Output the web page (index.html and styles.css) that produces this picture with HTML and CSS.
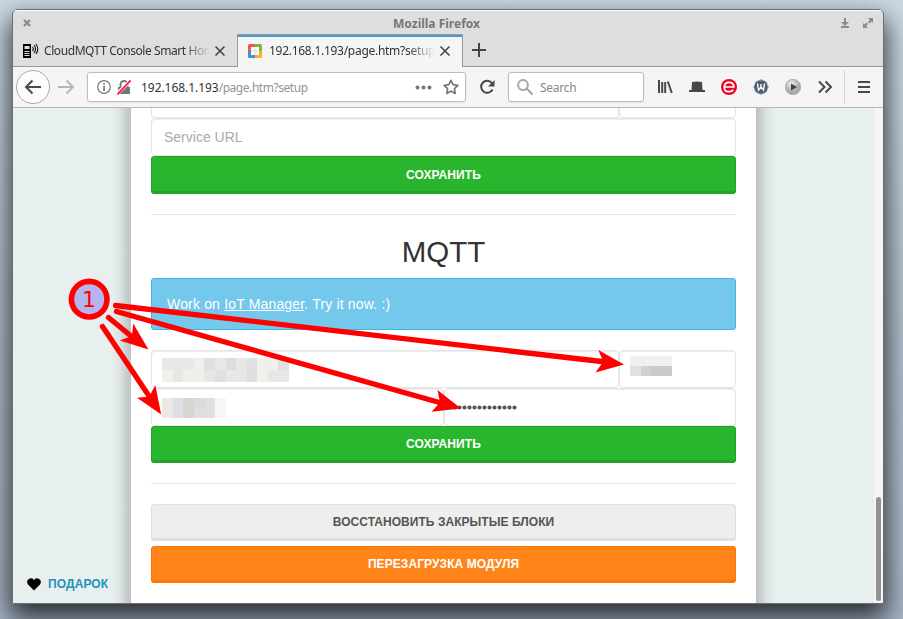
FILE: index.html
```html
<!DOCTYPE html>
<html lang="ru">
<head>
<meta charset="utf-8">
<title>Mozilla Firefox</title>
<link rel="stylesheet" href="styles.css">
</head>
<body>
<div class="window">
  <header class="titlebar">
    <svg class="win-close" width="8" height="8" viewBox="0 0 8 8"><path d="M1 1l6 6M7 1L1 7" stroke="#8b8b8b" stroke-width="2.4"/></svg>
    <span class="title">Mozilla Firefox</span>
    <svg class="win-tools" width="34" height="12" viewBox="0 0 34 12"><path d="M4 1h2v4h3L5 9 1 5h3zM1 9h8v2H1z" fill="#8b8b8b"/><path d="M28 1h5v5l-1.600-1.600L29.500 6.500 28 5l1.800-1.900zM23 6l1.600 1.600L26.500 5.500 28 7l-1.900 2L28 11h-5z" fill="#8b8b8b"/></svg>
  </header>
  <nav class="tabs">
    <div class="tab first">
      <svg width="16" height="16" viewBox="0 0 16 16"><path d="M0 1h8v14H0z"/><path d="M1.500 3h5v3h-5zM1.500 8h5v1h-5zM1.500 10h5v1h-5zM1.500 12h5v1h-5z" fill="#ddd"/><path d="M9.500 4q1.500 2 0 4M11 2q3 4 0 8M13 1q3.500 5 0 10" fill="none" stroke="#111" stroke-width="1.100"/></svg>
      <span class="tab-label cloud">CloudMQTT Console Smart Hor</span>
      <svg class="x" width="12" height="12" viewBox="0 0 12 12"><path d="M1.500 1.500l9 9M10.500 1.500l-9 9" stroke="#444" stroke-width="1.600"/></svg>
    </div>
    <div class="tab active">
      <svg width="14" height="14" viewBox="0 0 14 14"><rect width="14" height="14" rx="1.500" fill="#dce8e5"/><path d="M0 1.500Q0 0 1.500 0H7v3H3v4H0z" fill="#e85d43"/><path d="M7 0h5.500Q14 0 14 1.500V7h-3V3H7z" fill="#7db641"/><path d="M14 7v5.500q0 1.500-1.500 1.500H7v-3h4V7z" fill="#f3b52f"/><path d="M7 14H1.500Q0 14 0 12.500V7h3v4h4z" fill="#3f91d0"/><path d="M3 3h8v8H3z" fill="#fff"/><path d="M7 3v8M3 7h8" stroke="#ddd8ca"/></svg>
      <span class="tab-label local">192.168.1.193/page.htm?setup</span>
      <svg class="x" width="12" height="12" viewBox="0 0 12 12"><path d="M1.500 1.500l9 9M10.500 1.500l-9 9" stroke="#444" stroke-width="1.600"/></svg>
    </div>
    <svg class="plus" width="14" height="14" viewBox="0 0 14 14"><path d="M7 0v14M0 7h14" stroke="#444" stroke-width="2"/></svg>
  </nav>
  <div class="toolbar">
    <span class="back"><svg width="18" height="16" viewBox="0 0 18 16"><path d="M17 8H2M8.500 1.500L2 8l6.500 6.500" fill="none" stroke="#4b4b4b" stroke-width="2"/></svg></span>
    <svg class="forward" width="16" height="16" viewBox="0 0 16 16"><path d="M0 8h14.500M8.500 1.500L15 8l-6.500 6.500" fill="none" stroke="#b5b5b5" stroke-width="1.900"/></svg>
    <div class="urlbar">
      <svg width="14" height="14" viewBox="0 0 14 14"><circle cx="7" cy="7" r="6.300" fill="none" stroke="#777" stroke-width="1.200"/><path d="M6.200 3h1.700v1.700H6.200zM6.200 6h1.700v5H6.200z" fill="#777"/></svg>
      <svg class="lock" width="14" height="15" viewBox="0 0 14 15"><path d="M1 7h12v7H1z" fill="#777"/><path d="M3.500 8V4.500a3.500 3.500 0 0 1 7 0V8" fill="none" stroke="#777" stroke-width="1.900"/><path d="M0 14L13 1" stroke="#fff" stroke-width="3.400"/><path d="M.5 14.300L13.500 .5" stroke="#ff174f" stroke-width="1.900"/></svg>
      <span class="url"><b>192.168.1.193</b>/page.htm?setup</span>
      <svg class="dots" width="17" height="5" viewBox="0 0 17 5"><g fill="#777"><circle cx="2.500" cy="2.500" r="2"/><circle cx="8.500" cy="2.500" r="2"/><circle cx="14.500" cy="2.500" r="2"/></g></svg>
      <svg width="16" height="16" viewBox="0 0 16 16"><path d="M8 1.300l2.100 4.300 4.700.7-3.400 3.300.8 4.800L8 12.100l-4.200 2.300.8-4.800L1.200 6.300l4.700-.7z" fill="none" stroke="#777" stroke-width="1.700" stroke-linejoin="round"/></svg>
    </div>
    <svg class="reload" width="16" height="16" viewBox="0 0 16 16"><path d="M12.800 4A6 6 0 1 0 13.500 10.500" fill="none" stroke="#484848" stroke-width="2"/><path d="M15.500 1v6.500H9z" fill="#484848"/></svg>
    <div class="search">
      <svg width="16" height="16" viewBox="0 0 16 16"><circle cx="6" cy="6" r="4.900" fill="none" stroke="#a5a5a5" stroke-width="2"/><path d="M9.500 9.500l6 6" stroke="#a5a5a5" stroke-width="2"/></svg>
      <span>Search</span>
    </div>
    <div class="extensions">
      <svg width="16" height="16" viewBox="0 0 16 16"><path d="M2 1v13M5.200 3v11M8.200 3v11M10.800 2.500l4 11.500" stroke="#484848" stroke-width="2"/></svg>
      <svg width="16" height="16" viewBox="0 0 16 16"><path d="M3 3q5-1 10 0l.5 8H16v2H0v-2h2.500z" fill="#484848"/></svg>
      <svg width="16" height="16" viewBox="0 0 16 16"><circle cx="8" cy="8" r="8" fill="#e90427"/><path d="M3 8h10Q12.500 3.300 8 3.300T3.300 8 8 12.700q2.800 0 4.300-1.900" fill="none" stroke="#fff" stroke-width="1.700"/></svg>
      <svg width="16" height="16" viewBox="0 0 16 16"><path d="M8 0l3 1.500L14 3l.5 3L16 8l-1.500 2-.5 3-3 1.500L8 16l-3-1.500L2 13l-.5-3L0 8l1.500-2L2 3l3-1.500z" fill="#93a7bc"/><circle cx="8" cy="8" r="6.600" fill="#4e5e6e"/><path d="M4.500 4.500l1 6.500L8 8l2.500 3 1-6.500M8 5v4" fill="none" stroke="#fff" stroke-width="1.400"/></svg>
      <svg width="16" height="16" viewBox="0 0 16 16"><defs><radialGradient id="ball" cx=".4" cy=".3"><stop offset="0" stop-color="#f0f0f0"/><stop offset="1" stop-color="#aaa"/></radialGradient></defs><circle cx="8" cy="8" r="7.700" fill="url(#ball)" stroke="#999" stroke-width=".6"/><path d="M6 4.500l6 3.500-6 3.500z" fill="#444"/></svg>
      <svg width="16" height="16" viewBox="0 0 16 16"><path d="M2 2.500L7.500 8 2 13.500M8.500 2.500L14 8l-5.500 5.500" fill="none" stroke="#484848" stroke-width="2"/></svg>
    </div>
    <div class="menu"><svg width="12" height="12" viewBox="0 0 12 12"><path d="M0 1h12M0 6h12M0 11h12" stroke="#484848" stroke-width="2"/></svg></div>
  </div>
  <main class="viewport">
    <aside class="side">
      <a class="gift"><svg width="14" height="13" viewBox="0 0 14 13"><path d="M7 12.500L1 6.500Q-.5 4 .7 2 2.200.2 4.300.3 6.200.5 7 2.300 7.800.5 9.700.3q2.100-.1 3.600 1.700 1.200 2-.3 4.500z"/></svg>ПОДАРОК</a>
    </aside>
    <section class="page">
      <div class="row wide cut"><div class="field"></div><div class="field"></div></div>
      <div class="field service">Service URL</div>
      <div class="btn green">СОХРАНИТЬ</div>
      <div class="rule"></div>
      <h2>MQTT</h2>
      <div class="alert">Work on <u>IoT Manager</u>. Try it now. :)</div>
      <div class="row wide">
        <div class="field host"><svg width="127" height="24" viewBox="0 0 12 2" preserveAspectRatio="none" shape-rendering="crispEdges"><path fill="#e7e7e6" d="M0 0h12v2H0z"/><path fill="#eff0eb" d="M3 0h1v1H3zM0 1h1v1H0zM2 1h2v1H2zM9 0h2v1H9zM9 1h1v1H9z"/><path fill="#dfe0e2" d="M4 0h1v1H4zM8 0h1v1H8zM11 0h1v1h-1zM5 1h1v1H5z"/><path fill="#dededd" d="M6 0h1v1H6zM8 1h1v1H8z"/></svg></div>
        <div class="field port"><svg width="42" height="20" viewBox="0 0 4 2" preserveAspectRatio="none" shape-rendering="crispEdges"><path fill="#f0f0f0" d="M0 0h4v1H0z"/><path fill="#e1e1e2" d="M0 1h1v1H0z"/><path fill="#d2d0cf" d="M1 1h1v1H1z"/><path fill="#cacaca" d="M2 1h2v1H2z"/></svg></div>
      </div>
      <div class="row half">
        <div class="field user"><svg width="64" height="20" viewBox="0 0 6 2" preserveAspectRatio="none" shape-rendering="crispEdges"><path fill="#e9e8e5" d="M0 0h1v2H0z"/><path fill="#dedfe2" d="M1 0h4v2H1z"/><path fill="#d6d7d5" d="M2 0h1v2H2z"/><path fill="#d9dbdf" d="M3 0h1v1H3z"/><path fill="#e0e1df" d="M4 0h1v2H4z"/><path fill="#f5f6f8" d="M5 0h1v2H5z"/></svg></div>
        <div class="field"><svg class="mask" width="65" height="5" viewBox="0 0 65 5"><path d="M2.500 2.500h61" stroke="#555" stroke-width="4.200" stroke-linecap="round" stroke-dasharray="0 5"/></svg></div>
      </div>
      <div class="btn green save">СОХРАНИТЬ</div>
      <div class="rule"></div>
      <div class="btn gray">ВОССТАНОВИТЬ ЗАКРЫТЫЕ БЛОКИ</div>
      <div class="btn orange">ПЕРЕЗАГРУЗКА МОДУЛЯ</div>
    </section>
    <aside class="right"></aside>
    <div class="scroll"><div class="thumb"></div></div>
  </main>
</div>
<svg class="notes" width="903" height="619" viewBox="0 0 903 619">
  <g stroke="#f00" stroke-width="5.300" stroke-linecap="round">
    <path d="M115.500 305.500L606 362M116.500 311.500L443 403.500M108.500 317.500L134 338.500M102.500 326.500L151 399"/>
  </g>
  <g fill="#f00">
    <path d="M624 364.500L598.300 350l5 11.800-7.800 10.800z"/>
    <path d="M461 408.500L437.500 390l2.500 12.500-8.500 9.200z"/>
    <path d="M148.500 349.500L133.200 323.500l-1.200 12.500-12.300 4.500z"/>
    <path d="M161.200 414.500L155.300 385l-5.800 11.500-12.500 1.200z"/>
  </g>
  <circle cx="89.200" cy="299.200" r="17.800" fill="#b4b4f1" stroke="#f00" stroke-width="5.600"/>
  <text x="89" y="307" text-anchor="middle">1</text>
</svg>
</body>
</html>
```
FILE: styles.css
```css
* { box-sizing: border-box; }
body {
  margin: 0;
  height: 619px;
  padding: 9px 0 0 12px;
  overflow: hidden;
  background: linear-gradient(#cbd8e3, #b3c0cd 50%, #a6b4c4);
  font-family: "Liberation Sans", sans-serif;
}
svg { display: block; flex: none; }
.window {
  width: 872px;
  height: 595px;
  border: 1px solid #6b6d6f;
  border-radius: 5px 5px 0 0;
  overflow: hidden;
  background: #dedede;
  box-shadow: 0 12px 26px 2px rgba(0, 0, 0, .75);
  font-size: 12px;
}
.titlebar, .tabs, .toolbar, .urlbar, .search, .extensions { font-family: "Noto Sans", sans-serif; }
.titlebar {
  height: 25px;
  display: grid;
  grid-template-columns: 40px 1fr 40px;
  align-items: center;
  border-top: 1px solid #fff;
}
.win-close { margin-left: 10px; }
.win-tools { margin-left: -3px; }
.title { text-align: center; font-weight: bold; font-size: 12px; color: #777; padding-right: 23px; }
.tabs { height: 32px; display: flex; background: linear-gradient(#999, #999) bottom / 100% 1px no-repeat; }
.tab { display: flex; align-items: center; color: #333; }
.first { width: 224px; padding: 0 11px 1px 10px; }
.active { width: 226px; margin-top: -1px; padding: 0 11px 0 10px; background: #f5f5f5; border: solid #999; border-width: 1px 1px 0; box-shadow: inset 0 2px #429bd5; }
.active .tab-label { margin-top: -2px; }
.tab-label { overflow: hidden; white-space: nowrap; -webkit-mask-image: linear-gradient(90deg, #000 84%, transparent); mask-image: linear-gradient(90deg, #000 84%, transparent); }
.cloud { width: 166px; margin-left: 5px; letter-spacing: -.42px; }
.local { width: 166px; margin-left: 7px; letter-spacing: -.28px; }
.x { margin-left: auto; }
.plus { margin: 8px 0 0 9px; }
.toolbar { height: 41px; display: flex; align-items: center; background: #f5f5f5; border-bottom: 1px solid #b5b5b5; }
.back { width: 34px; height: 34px; margin-left: 3px; border: 1px solid #aaa; border-radius: 50%; background: #fcfcfc; display: grid; place-items: center; }
.forward { margin-left: 8px; }
.urlbar, .search { height: 30px; display: flex; align-items: center; background: #fff; border: 1px solid #bcbcbc; border-radius: 3px; box-shadow: 0 1px 3px rgba(0,0,0,.06); }
.urlbar { width: 379px; margin-left: 13px; padding: 0 6px 0 9px; }
.lock { margin-left: 6px; }
.url { margin-left: 10px; color: #939393; letter-spacing: -.45px; }
.url b { font-weight: normal; color: #333; letter-spacing: -.05px; }
.dots { margin: 0 11px 0 auto; }
.reload { margin-left: 13px; }
.search { width: 136px; margin-left: 13px; padding-left: 8px; color: #888; }
.search span { margin-left: 7px; letter-spacing: -.25px; }
.extensions { display: flex; gap: 16px; margin-left: 13px; }
.menu { height: 34px; margin-left: 11px; padding-left: 13px; border-left: 1px solid #d5d5d5; display: flex; align-items: center; }
.viewport { height: 495px; display: grid; grid-template-columns: 118px 625px 118px 9px; background: #fff; }
.side { display: flex; align-items: flex-end; background: linear-gradient(90deg, transparent 98px, rgba(80,80,80,.06) 106px, rgba(70,70,70,.28)), #e7f0ef; }
.right { background: linear-gradient(270deg, transparent 98px, rgba(80,80,80,.06) 106px, rgba(70,70,70,.28)), #e7f0ef; }
.gift { display: flex; gap: 7px; align-items: center; margin: 0 0 12px 14px; font: bold 12px/14px "Liberation Sans", sans-serif; letter-spacing: .1px; color: #2391ba; }
.page { padding: 0 20px; height: 495px; overflow: hidden; }
.row { display: grid; height: 38px; }
.wide { grid-template-columns: 468px 117px; }
.half { grid-template-columns: 293px 292px; }
.field { height: 38px; border: 1px solid #e5e5e5; border-radius: 4px; box-shadow: inset 0 1px 1px #ededed; background: #fff; }
.cut { height: 10px; }
.cut .field { height: 10px; border-top: 0; border-radius: 0 0 4px 4px; box-shadow: none; }
.service { padding-left: 12px; font-size: 14px; line-height: 36px; color: #aaa; }
.btn { height: 37px; border-radius: 4px; text-align: center; font-size: 12px; font-weight: bold; line-height: 37px; letter-spacing: .08px; }
.green { height: 38px; background: #29b62e; color: #fff; box-shadow: inset 0 0 0 1px #24a329, inset 0 -3px #24a329; line-height: 39px; }
.save { height: 37px; line-height: 37px; }
.gray { background: #eee; color: #555; box-shadow: inset 0 0 0 1px #e0e0e0, inset 0 -3px #e0e0e0; line-height: 37px; letter-spacing: .04px; }
.orange { margin-top: 5px; background: #ff851b; color: #fff; box-shadow: inset 0 0 0 1px #ff7701, inset 0 -3px #ff7701; line-height: 36px; }
.rule { height: 1px; margin: 20px 0; background: #e9e9e9; }
h2 { height: 43px; margin: 0; font: 29.5px/34px "Liberation Sans", sans-serif; color: #333; text-align: center; }
.alert { height: 52px; margin-bottom: 20px; padding-left: 15px; border: 1px solid #42b3e5; border-radius: 3px; background: #74c8ec; color: #fff; font-size: 14px; line-height: 50px; letter-spacing: .17px; }
.host { padding: 7px 0 0 10px; }
.port { padding: 5px 0 0 10px; }
.user { padding: 9px 0 0 10px; }
.mask { margin: 16px 0 0 7px; }
.scroll { background: #f5f5f5; display: flex; align-items: flex-end; padding: 0 2px 2px; }
.thumb { width: 5px; height: 104px; border-radius: 3px; background: #929292; }
.notes { position: absolute; left: 0; top: 0; pointer-events: none; }
.notes text { font: 22px "DejaVu Sans", sans-serif; fill: #f00; }
```
